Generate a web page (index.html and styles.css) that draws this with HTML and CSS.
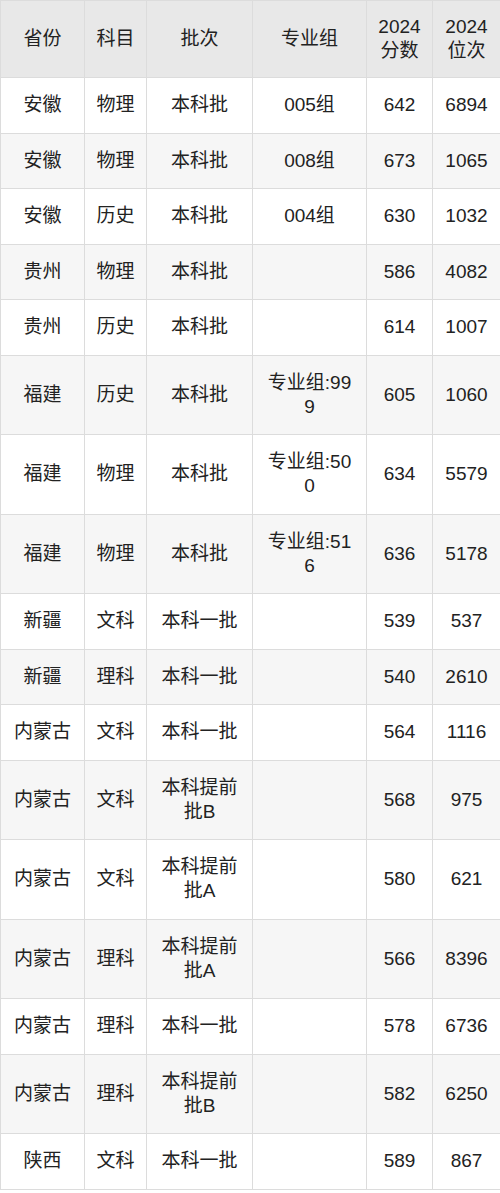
FILE: index.html
```html
<!DOCTYPE html>
<html lang="zh">
<head>
<meta charset="utf-8">
<link rel="stylesheet" href="styles.css">
</head>
<body>
<table class="score-table">
  <colgroup>
    <col class="c1"><col class="c2"><col class="c3"><col class="c4"><col class="c5"><col class="c6">
  </colgroup>
  <thead>
    <tr><th>省份</th><th>科目</th><th>批次</th><th>专业组</th><th>2024分数</th><th>2024位次</th></tr>
  </thead>
  <tbody>
    <tr><td>安徽</td><td>物理</td><td>本科批</td><td>005组</td><td>642</td><td>6894</td></tr>
    <tr><td>安徽</td><td>物理</td><td>本科批</td><td>008组</td><td>673</td><td>1065</td></tr>
    <tr><td>安徽</td><td>历史</td><td>本科批</td><td>004组</td><td>630</td><td>1032</td></tr>
    <tr><td>贵州</td><td>物理</td><td>本科批</td><td></td><td>586</td><td>4082</td></tr>
    <tr><td>贵州</td><td>历史</td><td>本科批</td><td></td><td>614</td><td>1007</td></tr>
    <tr><td>福建</td><td>历史</td><td>本科批</td><td>专业组:999</td><td>605</td><td>1060</td></tr>
    <tr><td>福建</td><td>物理</td><td>本科批</td><td>专业组:500</td><td>634</td><td>5579</td></tr>
    <tr><td>福建</td><td>物理</td><td>本科批</td><td>专业组:516</td><td>636</td><td>5178</td></tr>
    <tr><td>新疆</td><td>文科</td><td>本科一批</td><td></td><td>539</td><td>537</td></tr>
    <tr><td>新疆</td><td>理科</td><td>本科一批</td><td></td><td>540</td><td>2610</td></tr>
    <tr><td>内蒙古</td><td>文科</td><td>本科一批</td><td></td><td>564</td><td>1116</td></tr>
    <tr><td>内蒙古</td><td>文科</td><td>本科提前批B</td><td></td><td>568</td><td>975</td></tr>
    <tr><td>内蒙古</td><td>文科</td><td>本科提前批A</td><td></td><td>580</td><td>621</td></tr>
    <tr><td>内蒙古</td><td>理科</td><td>本科提前批A</td><td></td><td>566</td><td>8396</td></tr>
    <tr><td>内蒙古</td><td>理科</td><td>本科一批</td><td></td><td>578</td><td>6736</td></tr>
    <tr><td>内蒙古</td><td>理科</td><td>本科提前批B</td><td></td><td>582</td><td>6250</td></tr>
    <tr><td>陕西</td><td>文科</td><td>本科一批</td><td></td><td>589</td><td>867</td></tr>
  </tbody>
</table>
</body>
</html>
```

FILE: styles.css
```css
html, body {
  margin: 0;
  padding: 0;
  background: #ffffff;
}

.score-table {
  width: 500px;
  table-layout: fixed;
  border-collapse: collapse;
  font-family: "Liberation Sans", "Noto Sans CJK SC", sans-serif;
  font-size: 19px;
  line-height: 24px;
  color: #222222;
}

.c1 { width: 84px; }
.c2 { width: 62px; }
.c3 { width: 106px; }
.c4 { width: 114px; }
.c5 { width: 66px; }
.c6 { width: 68px; }

.score-table th,
.score-table td {
  border: 1px solid #dcdcdc;
  padding: 15px 10px 15.5px;
  text-align: center;
  vertical-align: middle;
  word-break: break-all;
  font-weight: normal;
}

.score-table th {
  background: #e8e8e8;
  padding: 14px 10px;
}

.score-table tbody tr:nth-child(even) td {
  background: #f6f6f6;
}
```
